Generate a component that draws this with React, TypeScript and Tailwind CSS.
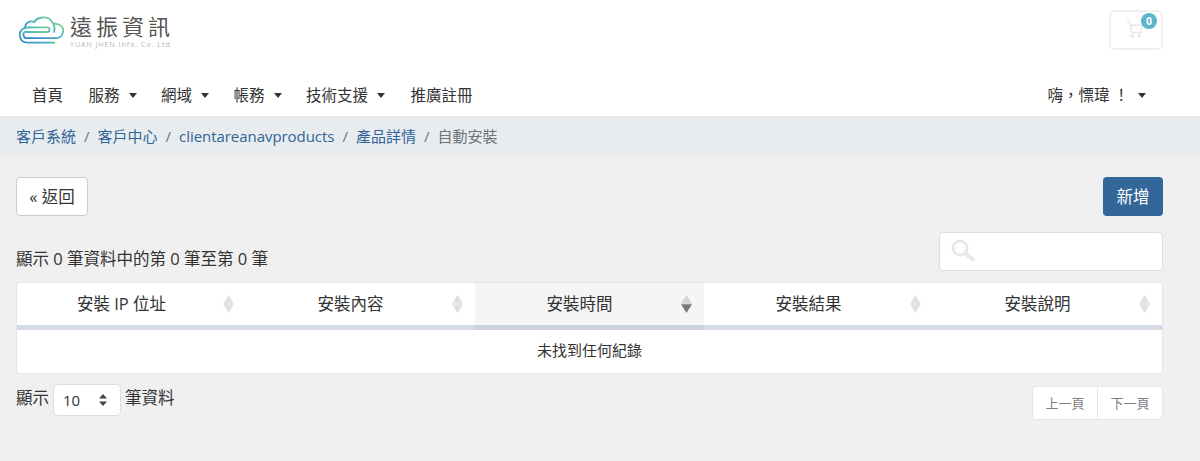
import React from "react";

const font = { fontFamily: '"Open Sans", "Noto Sans CJK TC", sans-serif' };

function Caret() {
  return <span className="inline-block ml-[9px] w-0 h-0 border-x-[4.5px] border-x-transparent border-t-[5px] border-t-[#333]" />;
}

function Logo() {
  return (
    <svg width="45" height="30" viewBox="1 1 50 32" fill="none" strokeWidth="2" strokeLinecap="round" strokeLinejoin="round">
      <defs>
        <linearGradient id="lg" x1="0" y1="1" x2="1" y2="0">
          <stop offset="0" stopColor="#3b82c8" />
          <stop offset="0.55" stopColor="#46b8c0" />
          <stop offset="1" stopColor="#7fd08a" />
        </linearGradient>
      </defs>
      <path d="M8 14 C7 8 13 5 18 7 C21 1 33 0 37 6 C41 10 41 14 40 18" stroke="url(#lg)" />
      <path d="M41 9 C48 9 51 14 50 18 C49 23 46 25 42 25 L14 25" stroke="url(#lg)" />
      <path d="M12 13 C4 13 1 18 2 23 C3 28 6 30 11 30 L39 30" stroke="url(#lg)" />
      <path d="M10 18 L32 18 C36 18 36 13 32 13 L12 13" stroke="url(#lg)" />
      <path d="M32 18 C27 18 8 18 8 18 C5 18 5 25 10 25 L16 25" stroke="url(#lg)" />
      <circle cx="40" cy="30" r="1.4" fill="#7fd08a" />
      <circle cx="41" cy="9" r="1.4" fill="#7fd08a" />
    </svg>
  );
}

function Sort({ active }: { active?: boolean }) {
  return (
    <svg width="11" height="18" viewBox="0 0 11 18" className="shrink-0">
      <path d="M5.5 0 L11 8.75 L0 8.75 Z" fill={active ? "#d3d3d3" : "#e0e0e0"} />
      <path d="M5.5 18 L11 9.25 L0 9.25 Z" fill={active ? "#777" : "#e0e0e0"} />
    </svg>
  );
}

function Th({ label, active }: { label: string; active?: boolean }) {
  return (
    <div className={`flex-1 flex items-center justify-between pr-[12px] ${active ? "bg-[#f5f5f5]" : ""}`}>
      <span className="flex-1 text-center pl-[3px]">{label}</span>
      <Sort active={active} />
    </div>
  );
}

export default function App() {
  return (
    <div className="w-[1200px] h-[461px] overflow-hidden bg-[#f0f0f0] text-[15px] leading-[22px] text-[#333]" style={font}>
      <header className="bg-white h-[116px] flex flex-col">
        <div className="h-[84px] pl-[19px] pr-[37px] flex justify-between items-start">
          <div className="flex mt-[14px]">
            <span className="mt-[2px]"><Logo /></span>
            <div className="ml-[6px] flex flex-col text-[#555]">
              <span className="text-[22px] leading-[24px] tracking-[4px] whitespace-nowrap">遠振資訊</span>
              <span className="text-[7px] leading-[8px] mt-[3px] tracking-[1px] text-[#b3b3b3] whitespace-nowrap">YUAN JHEN Info. Co. Ltd</span>
            </div>
          </div>
          <div className="mt-[10px] relative w-[54px] h-[40px] border-2 border-[#f0f0f0] rounded-[5px] flex items-center justify-center">
            <svg width="17" height="17" viewBox="0 0 24 24" fill="none" stroke="#e6e6e6" strokeWidth="2" className="ml-[-4px] mt-[-2px]">
              <circle cx="9" cy="21" r="1.5" />
              <circle cx="19" cy="21" r="1.5" />
              <path d="M1 1h4l3 15h13l2-10H6" />
            </svg>
            <span className="absolute top-[1px] right-[4px] w-[16px] h-[16px] rounded-full bg-[#5bb5cb] text-white text-[10.5px] font-bold leading-[16px] text-center">0</span>
          </div>
        </div>
        <nav className="pl-[32px] pr-[54px] flex justify-between items-center h-[22px] text-[15.5px]">
          <div className="flex items-center gap-[24.5px]">
            <span className="mr-[1px]">首頁</span>
            <span className="flex items-center">服務<Caret /></span>
            <span className="flex items-center">網域<Caret /></span>
            <span className="flex items-center">帳務<Caret /></span>
            <span className="flex items-center">技術支援<Caret /></span>
            <span className="ml-[1px]">推廣註冊</span>
          </div>
          <span className="flex items-center">嗨，慓瑋 ！<Caret /></span>
        </nav>
      </header>

      <div className="h-[40px] bg-[#e9ecef] px-[16px] flex items-center text-[#6c757d]">
        <span className="text-[#2f6497]">客戶系統</span>
        <span className="mx-[8px]">/</span>
        <span className="text-[#2f6497]">客戶中心</span>
        <span className="mx-[8px]">/</span>
        <span className="text-[#2f6497] tracking-[-0.05px]">clientareanavproducts</span>
        <span className="mx-[8px]">/</span>
        <span className="text-[#2f6497]">產品詳情</span>
        <span className="mx-[8px]">/</span>
        <span>自動安裝</span>
      </div>

      <main className="pl-[16px] pr-[37px] pt-[21px]">
        <div className="flex justify-between items-start text-[16.5px]">
          <button className="w-[72px] h-[39px] bg-white border border-[#ccc] rounded-[4px] text-[#333]">« 返回</button>
          <button className="w-[60px] h-[39px] bg-[#336699] rounded-[4px] text-white">新增</button>
        </div>

        <div className="mt-[16px] flex justify-between items-end">
          <span className="mb-[1px] text-[16.5px]">顯示 0 筆資料中的第 0 筆至第 0 筆</span>
          <div className="w-[224px] h-[39px] bg-white border border-[#d8dde6] rounded-[4px] flex items-center pl-[10px]">
            <svg width="26" height="26" viewBox="0 0 26 26" fill="none" stroke="#e8e8e8" className="mt-[-1px]">
              <circle cx="10" cy="10" r="7" strokeWidth="3" />
              <path d="M15.5 15.5 L23 21.5" strokeWidth="4" strokeLinecap="round" />
            </svg>
          </div>
        </div>

        <div className="mt-[11px] h-[92px] bg-white border border-[#e4e4e4] rounded-[4px] overflow-hidden flex flex-col">
          <div className="h-[42px] flex text-[16.5px]">
            <Th label="安裝 IP 位址" />
            <Th label="安裝內容" />
            <Th label="安裝時間" active />
            <Th label="安裝結果" />
            <Th label="安裝說明" />
          </div>
          <div className="h-[5px] flex bg-[#d4dae4]">
            <div className="w-[458px]" />
            <div className="w-[229px] bg-[#cdd3dd]" />
          </div>
          <div className="flex-1 flex items-center justify-center pb-[4px]">未找到任何紀錄</div>
        </div>

        <div className="mt-[10px] flex justify-between items-start">
          <div className="flex items-center gap-[4px] text-[16.5px]">
            <span className="mt-[-4px]">顯示</span>
            <div className="w-[68px] h-[32px] bg-white border border-[#d8dde6] rounded-[4px] flex items-center justify-between pl-[9px] pr-[13px]">
              <span className="text-[15px]">10</span>
              <svg width="8" height="12" viewBox="0 0 8 12">
                <path d="M4 0 L8 4.5 L0 4.5 Z M4 12 L8 7.5 L0 7.5 Z" fill="#444" />
              </svg>
            </div>
            <span className="mt-[-4px]">筆資料</span>
          </div>
          <div className="mt-[2px] w-[131px] h-[34px] bg-white border border-[#e6e6e6] rounded-[4px] flex text-[13px] text-[#7b8088]">
            <span className="flex-1 flex items-center justify-center border-r border-[#e6e6e6]">上一頁</span>
            <span className="flex-1 flex items-center justify-center">下一頁</span>
          </div>
        </div>
      </main>
    </div>
  );
}
